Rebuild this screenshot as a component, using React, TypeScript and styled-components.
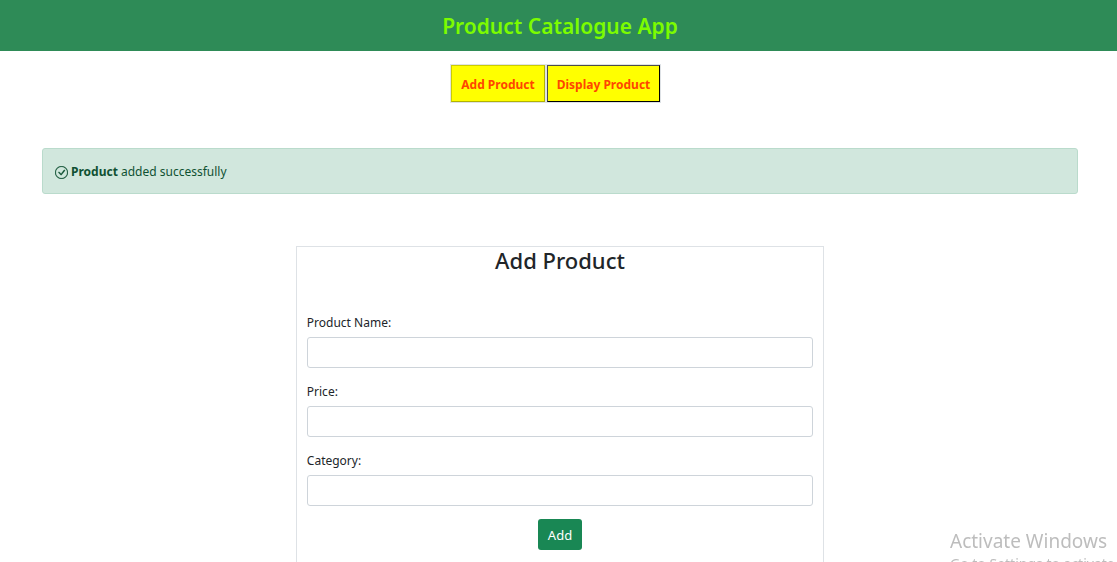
import React from "react";
import styled, { createGlobalStyle } from "styled-components";

const GlobalStyle = createGlobalStyle`
  *, *::before, *::after { box-sizing: border-box; }
  body {
    margin: 0;
    background: #fff;
    color: #212529;
    font-family: "Segoe UI", "Noto Sans", sans-serif;
    font-size: 12px;
    line-height: 22px;
  }
`;

const Header = styled.header`
  display: flex;
  justify-content: center;
  padding: 12px 0 11px 3px;
  background: #2e8b57;
`;

const Title = styled.h1`
  margin: 0;
  color: #7cfc00;
  font-size: 21px;
  font-weight: 600;
  line-height: 28px;
`;

const Nav = styled.nav`
  display: flex;
  justify-content: center;
  margin-top: 13px;
  padding-right: 6px;
`;

const TabGroup = styled.div`
  display: flex;
  gap: 2px;
  padding: 1px;
  background: #dee2e6;
`;

const Tab = styled.button<{ $wide?: boolean; $focused?: boolean }>`
  width: ${(p) => (p.$wide ? 113 : 94)}px;
  height: 37px;
  padding: 2px 0 0;
  border: 1px solid;
  border-color: ${(p) => (p.$focused ? "#4c4c4c #000 #000 #4c4c4c" : "#cccc00 #b3b300 #b3b300 #cccc00")};
  background: #ffff00;
  color: #ff4500;
  font: inherit;
  font-weight: 700;
  white-space: nowrap;
`;

const Container = styled.main`
  display: flex;
  flex-direction: column;
  align-items: center;
  max-width: 1059px;
  margin: 45px auto 0;
  padding: 0 10px 0 13px;
`;

const Alert = styled.div`
  display: flex;
  align-items: center;
  gap: 3px;
  width: 100%;
  padding: 12px 12px 10px;
  border: 1px solid #badbcc;
  border-radius: 3px;
  background: #d1e7dd;
  color: #0f5132;
`;

const Form = styled.form`
  display: flex;
  flex-direction: column;
  width: 51%;
  margin-top: 52px;
  padding: 0 10px 40px;
  border: 1px solid #dee2e6;
`;

const FormTitle = styled.h2`
  margin: 0 0 39px;
  font-size: 22px;
  font-weight: 500;
  line-height: 26px;
  text-align: center;
`;

const Field = styled.div`
  display: flex;
  flex-direction: column;
  gap: 3px;
  margin-bottom: 13px;
`;

const Input = styled.input`
  width: 100%;
  height: 31px;
  padding: 5px 10px;
  border: 1px solid #ced4da;
  border-radius: 3px;
  background: #fff;
  font: inherit;
`;

const Submit = styled.button`
  align-self: center;
  height: 31px;
  padding: 0 10px;
  border: 0;
  border-radius: 3px;
  background: #198754;
  color: #fff;
  font: inherit;
  font-size: 13px;
`;

const Watermark = styled.aside`
  position: fixed;
  left: calc(100% - 167px);
  top: calc(100vh - 34px);
  color: #bdbdbd;
  font-size: 19px;
  line-height: 26px;
  white-space: nowrap;
  pointer-events: none;
`;

const WatermarkNote = styled.div`
  font-size: 14px;
  line-height: 20px;
`;

const CheckCircle = () => (
  <svg width="13" height="13" viewBox="0 0 16 16" fill="currentColor" stroke="currentColor" strokeWidth="0.3" aria-hidden="true">
    <path d="M8 15A7 7 0 1 1 8 1a7 7 0 0 1 0 14zm0 1A8 8 0 1 0 8 0a8 8 0 0 0 0 16z" />
    <path d="M10.97 4.97a.235.235 0 0 0-.02.022L7.477 9.417 5.384 7.323a.75.75 0 0 0-1.06 1.06L6.97 11.03a.75.75 0 0 0 1.079-.02l3.992-4.99a.75.75 0 0 0-1.071-1.05z" />
  </svg>
);

const fields = [
  { id: "product-name", label: "Product Name:" },
  { id: "price", label: "Price:" },
  { id: "category", label: "Category:" },
];

export default function App() {
  return (
    <>
      <GlobalStyle />
      <Header>
        <Title>Product Catalogue App</Title>
      </Header>
      <Nav>
        <TabGroup>
          <Tab type="button">Add Product</Tab>
          <Tab type="button" $wide $focused>Display Product</Tab>
        </TabGroup>
      </Nav>
      <Container>
        <Alert role="alert">
          <CheckCircle />
          <span><strong>Product</strong> added successfully</span>
        </Alert>
        <Form onSubmit={(e) => e.preventDefault()}>
          <FormTitle>Add Product</FormTitle>
          {fields.map((f) => (
            <Field key={f.id}>
              <label htmlFor={f.id}>{f.label}</label>
              <Input id={f.id} name={f.id} type="text" />
            </Field>
          ))}
          <Submit type="submit">Add</Submit>
        </Form>
      </Container>
      <Watermark>
        Activate Windows
        <WatermarkNote>Go to Settings to activate Windows.</WatermarkNote>
      </Watermark>
    </>
  );
}
